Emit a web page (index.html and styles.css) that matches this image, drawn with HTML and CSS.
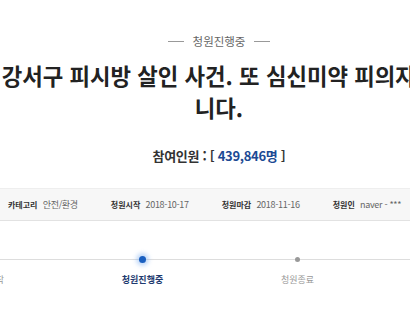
FILE: index.html
```html
<!DOCTYPE html>
<html lang="ko">
<head>
  <meta charset="UTF-8" />
  <title>청원진행중</title>
  <link rel="stylesheet" href="styles.css">
</head>
<body>
  <div class="page">
    <div class="head">
      <!-- 청원 상태 -->
      <div class="status">
        <span class="dash"></span>
        <span>청원진행중</span>
        <span class="dash"></span>
      </div>

      <h1 class="title">강서구 피시방 살인 사건. 또 심신미약 피의자입니다.</h1>

      <p class="count">참여인원 : [ <span class="num">439,846명</span> ]</p>
    </div>

    <!-- 청원 정보 -->
    <ul class="info">
      <li><b>카테고리</b> 안전/환경</li>
      <li><b>청원시작</b> 2018-10-17</li>
      <li><b>청원마감</b> 2018-11-16</li>
      <li><b>청원인</b> naver - ***</li>
    </ul>

    <!-- 진행 단계 -->
    <ol class="steps">
      <li class="step"><span class="dot"></span>청원시작</li>
      <li class="step active"><span class="dot"></span>청원진행중</li>
      <li class="step"><span class="dot"></span>청원종료</li>
      <li class="step"><span class="dot"></span>답변완료</li>
    </ol>
  </div>
</body>
</html>
```

FILE: styles.css
```css
html, body {
  margin: 0;
  padding: 0;
  background: #fff;
  overflow: hidden;
}
body {
  font-family: "Noto Sans CJK KR", "Noto Sans", sans-serif;
  color: #333;
}
.page {
  width: 620px;
  margin-left: -90px;
  padding-top: 31px;
}
.head {
  width: 440px;
  margin-left: 89px;
}
.status {
  display: flex;
  justify-content: center;
  align-items: center;
  gap: 9px;
  font-size: 11.5px;
  color: #666;
  line-height: 20px;
}
.status .dash {
  width: 16px;
  height: 1px;
  background: #999;
}
.title {
  margin: 8px 0 0;
  font-size: 22.3px;
  line-height: 32px;
  font-weight: bold;
  color: #222;
  text-align: center;
}
.count {
  margin: 21px 0 0;
  text-align: center;
  font-size: 13px;
  line-height: 24px;
  font-weight: bold;
  letter-spacing: -0.3px;
  color: #333;
}
.count .num {
  color: #1c4a94;
}
.info {
  list-style: none;
  margin: 20px 0 0;
  padding: 0 0 0 98px;
  height: 31px;
  display: flex;
  align-items: center;
  gap: 33px;
  background: #f7f7f7;
  border-top: 1px solid #eee;
  border-bottom: 1px solid #e2e2e2;
  font-size: 9px;
  letter-spacing: -0.3px;
  color: #666;
}
.info b {
  font-size: 8px;
  letter-spacing: 0;
  color: #333;
  margin-right: 3px;
}
.steps {
  list-style: none;
  margin: 0;
  padding: 36px 0 0;
  display: flex;
  position: relative;
}
.steps::before {
  content: "";
  position: absolute;
  left: 0;
  right: 0;
  top: 38px;
  height: 1px;
  background: #ddd;
}
.step {
  flex: 1;
  display: flex;
  flex-direction: column;
  align-items: center;
  font-size: 9px;
  line-height: 14px;
  color: #999;
  position: relative;
}
.step .dot {
  width: 5px;
  height: 5px;
  border-radius: 50%;
  background: #999;
  margin-bottom: 11px;
}
.step.active {
  color: #1f3b70;
  font-weight: bold;
}
.step.active .dot {
  width: 7px;
  height: 7px;
  margin-top: -1px;
  margin-bottom: 10px;
  background: #1a5fc0;
  box-shadow: 0 0 4px 3px rgba(120, 170, 240, 0.45);
}
```
